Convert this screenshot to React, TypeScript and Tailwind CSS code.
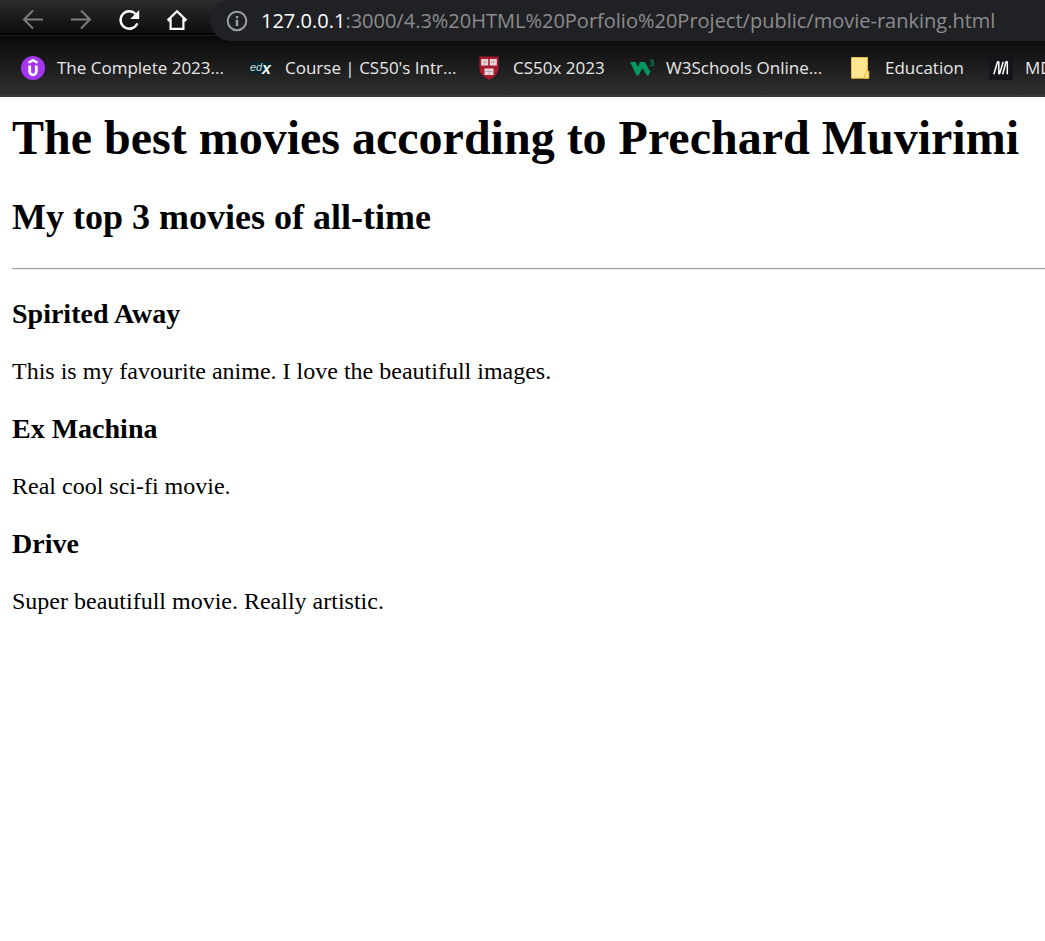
import type { ReactNode } from "react";

type Bookmark = { label: string; icon: ReactNode; className: string };

const movies = [
  { title: "Spirited Away", review: "This is my favourite anime. I love the beautifull images." },
  { title: "Ex Machina", review: "Real cool sci-fi movie." },
  { title: "Drive", review: "Super beautifull movie. Really artistic." },
];

function ArrowIcon({ flipped = false }: { flipped?: boolean }) {
  return (
    <svg viewBox="0 0 24 24" className="size-6" fill="none" stroke="#7c7c7c" strokeWidth="2">
      {flipped ? <path d="M2 11.500h18.500M12 2.500l9 9-9 9" /> : <path d="M22 11.500H3.500M12 2.500l-9 9 9 9" />}
    </svg>
  );
}

function ReloadIcon() {
  return (
    <svg viewBox="0 0 24 24" className="size-6" fill="none">
      <path d="M20.300 15.400A8.700 8.700 0 1 1 18.600 6" stroke="#fff" strokeWidth="2.400" />
      <path d="M22.200 2v9h-9z" fill="#fff" />
    </svg>
  );
}

function HomeIcon() {
  return (
    <svg viewBox="0 0 24 24" className="size-6" fill="none" stroke="#fff" strokeWidth="2.200">
      <path d="M5.600 10.500v10.400h12.800V10.500M2.600 12.400L12 3.300l9.400 9.100M2.800 12.400H5.600M21.200 12.400H18.400" />
    </svg>
  );
}

function InfoIcon() {
  return (
    <svg viewBox="0 0 22 22" className="size-[22px] shrink-0" fill="none" stroke="#9aa0a6" strokeWidth="2">
      <circle cx="11" cy="11" r="9.300" />
      <path d="M11 9.800v6.200M11 6v2.200" strokeWidth="2.400" />
    </svg>
  );
}

function UdemyIcon() {
  return (
    <svg viewBox="0 0 24 24" className="size-6 shrink-0">
      <circle cx="12" cy="12" r="12" fill="#a435f0" />
      <path d="M7.500 6.800L12 4.200l4.500 2.600" fill="none" stroke="#fff" strokeWidth="2.400" />
      <path d="M8.700 9.500v6a3.300 3.300 0 0 0 6.600 0v-6" fill="none" stroke="#fff" strokeWidth="2.800" />
    </svg>
  );
}

function EdxIcon() {
  return (
    <svg viewBox="0 0 24 24" className="size-6 shrink-0">
      <path d="M3 6h19v11H20v1.500H9V17H1v-7h2z" fill="#02262b" />
      <text x="1" y="15" fill="#d5dfe0" fontSize="11" fontStyle="italic" fontFamily="Liberation Sans, sans-serif">ed</text>
      <text x="13" y="17.500" fill="#fff" fontSize="16" fontWeight="700" fontStyle="italic" fontFamily="Liberation Sans, sans-serif">x</text>
    </svg>
  );
}

function ShieldIcon() {
  return (
    <svg viewBox="0 0 24 24" className="size-6 shrink-0">
      <path d="M2.500 .5h19V12c0 6-4 9-9.500 11.700C6.500 21 2.500 18 2.500 12z" fill="#a51c30" />
      <path d="M4.200 3h7v6.500h-7zM12.800 3h7v6.500h-7zM7.500 12.500h9V19h-9z" fill="#e8d8da" />
      <path d="M7.700 3v6.500M16.300 3v6.500M12 12.500V19" stroke="#d0b8bc" strokeWidth="1" />
      <path d="M5.500 6h4.500M14 6h4.500M8.500 15.500h7" stroke="#b5a8aa" strokeWidth="1" />
    </svg>
  );
}

function W3Icon() {
  return (
    <svg viewBox="0 0 24 24" className="size-6 shrink-0">
      <path d="M0 6h5.500l2.500 5L10 6h5l4.500 8.500 1 .8-2 4.200h-1.700L12.500 12 8.500 19.500H6.500z" fill="#059862" />
      <path d="M19.800 4.300h3.200v5.200h-3.200M20.500 6.800H23" fill="none" stroke="#087e54" strokeWidth="1.200" />
    </svg>
  );
}

function FolderIcon() {
  return (
    <svg viewBox="0 0 24 24" className="size-6 shrink-0">
      <path d="M2.500 1.500h16v13.800h1.200v6.900H2.500z" fill="#ffe692" stroke="#e9bc3c" />
      <path d="M18.500 15.300H17v3.400h-1.500v3.500h4.200v-6.900z" fill="#ffe692" stroke="#e9bc3c" />
    </svg>
  );
}

function MdnIcon() {
  return (
    <svg viewBox="0 0 24 24" className="size-6 shrink-0">
      <path d="M0 0h24v24H0z" fill="#15141a" />
      <path
        d="M4.800 18.300L8.600 5.800h1.200V17.800h.8L14.200 5.800M13.700 18.300L17 5.800h1.300v12.500"
        fill="none"
        stroke="#fff"
        strokeWidth="1.500"
        strokeLinejoin="bevel"
      />
    </svg>
  );
}

const bookmarks: Bookmark[] = [
  { label: "The Complete 2023...", icon: <UdemyIcon />, className: "w-[228px]" },
  { label: "Course | CS50's Intr...", icon: <EdxIcon />, className: "w-[228px]" },
  { label: "CS50x 2023", icon: <ShieldIcon />, className: "w-[153px]" },
  { label: "W3Schools Online...", icon: <W3Icon />, className: "w-[219px]" },
  { label: "Education", icon: <FolderIcon />, className: "w-[140px]" },
  { label: "MD", icon: <MdnIcon />, className: "w-[120px]" },
];

function Toolbar() {
  return (
    <div className="flex h-[41px] items-start bg-[linear-gradient(to_bottom,#2b2b2b_0px,#0d0d0d_33px,#000_33px,#000_35px,#202020_35px,#202020_36px,#090909_36px,#0b0b0b_41px)]">
      <nav aria-label="Browser" className="flex gap-6 pt-2 pl-[21px]">
        <button type="button" aria-label="Back"><ArrowIcon /></button>
        <button type="button" aria-label="Forward"><ArrowIcon flipped /></button>
        <button type="button" aria-label="Reload"><ReloadIcon /></button>
        <button type="button" aria-label="Home"><HomeIcon /></button>
      </nav>
      <div className="ml-[21px] flex h-[41px] min-w-0 flex-1 items-center gap-[13px] rounded-l-full bg-[#202124] pl-4">
        <InfoIcon />
        <a href="#top" className="truncate text-[20px] leading-[40px] text-[#8b8c8e]">
          <span className="text-white">127.0.0.1</span>:3000/4.3%20HTML%20Porfolio%20Project/public/movie-ranking.html
        </a>
      </div>
    </div>
  );
}

function BookmarksBar() {
  return (
    <nav
      aria-label="Bookmarks"
      className="flex h-14 overflow-hidden border-b-2 border-[#3b393b] bg-linear-to-b from-[#0d0d0d] to-[#303030] pl-[21px]"
    >
      {bookmarks.map((item) => (
        <a
          key={item.label}
          href="#top"
          className={`flex h-[54px] shrink-0 items-center gap-3 text-[17px] whitespace-nowrap text-[#e8e8e8] ${item.className}`}
        >
          {item.icon}
          {item.label}
        </a>
      ))}
    </nav>
  );
}

export default function App() {
  return (
    <div id="top" className="min-h-screen overflow-x-hidden bg-white">
      <header className="font-['Open_Sans','Noto_Sans',sans-serif]">
        <Toolbar />
        <BookmarksBar />
      </header>
      <main className="pt-[13px] pl-3 font-['Liberation_Serif',serif] text-black">
        <h1 className="text-[48px] leading-[55px] font-bold whitespace-nowrap">
          The best movies according to Prechard Muvirimi
        </h1>
        <h2 className="mt-8 text-[36px] leading-[41px] font-bold">My top 3 movies of all-time</h2>
        <hr className="mt-[30px] border-t border-b border-t-[#9a9a9a] border-b-[#eeeeee]" />
        {movies.map((movie) => (
          <section key={movie.title} className="mt-7">
            <h3 className="text-[28px] leading-8 font-bold">{movie.title}</h3>
            <p className="mt-7 text-[24px] leading-[27px]">{movie.review}</p>
          </section>
        ))}
      </main>
    </div>
  );
}
